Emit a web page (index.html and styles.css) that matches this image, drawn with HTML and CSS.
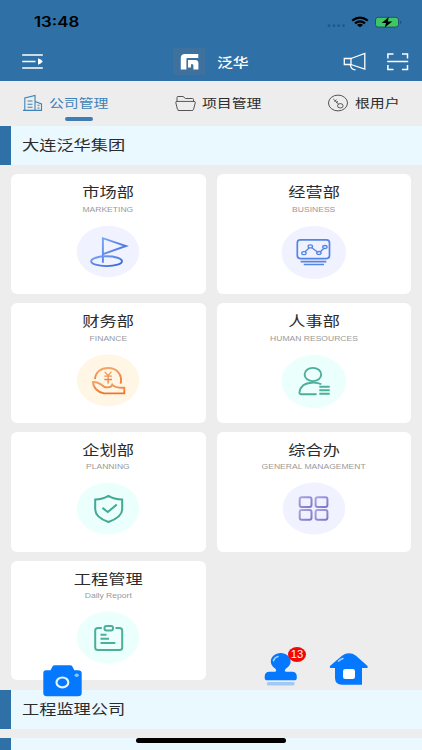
FILE: index.html
```html
<!DOCTYPE html>
<html lang="zh-CN">
<head>
<meta charset="utf-8">
<title>泛华</title>
<link rel="stylesheet" href="styles.css">
</head>
<body>
<div class="app">
  <header class="header">
    <div class="status">
      <span class="time wide">13:48</span>
      <svg class="status-icons" width="76" height="16" viewBox="326 14 76 16">
        <g fill="#245787"><circle cx="329" cy="25.7" r="1.4"/><circle cx="334" cy="25.7" r="1.4"/><circle cx="338.700" cy="25.7" r="1.4"/><circle cx="343.500" cy="25.7" r="1.4"/></g>
        <g fill="none" stroke="#000" stroke-width="2.300"><path d="M352.200 20.600Q360 14.600 367.800 20.600"/><path d="M355 23.300Q360 19.400 365 23.300"/></g>
        <path d="M356.900 24.900Q360 22.800 363.100 24.900L360 27.300Z"/>
        <rect x="375.500" y="17.300" width="23" height="9.800" rx="2.600" fill="#3dc765" stroke="#234f72" stroke-width="1"/>
        <path d="M400 20.500Q402.500 22.200 400 24Z" fill="#234f72"/>
        <path d="M388.800 17L381.700 22.900H386L384.700 27.500L392.300 21.400H387.800Z"/>
      </svg>
    </div>
    <div class="nav">
      <svg class="menu" width="22" height="16" viewBox="22 54 22 16" fill="none" stroke="#fff" stroke-width="1.600"><path d="M22.200 55H42.800M22.200 61.500H35.500M22.200 68H42.800"/><path d="M38 58.200Q41 59.200 42.800 61.500Q41 63.800 38 64.800Z" fill="#fff" stroke="none"/></svg>
      <div class="brand">
        <svg width="32" height="27" viewBox="173 48 32 27"><rect x="173" y="48" width="32" height="27" fill="#3e719d"/><path d="M180.800 69.500V58Q180.800 54 185 54H198.300V58H187.500Q186.400 58 186.400 59V69.500Z" fill="#fff"/><path d="M188 60H195Q198.400 60 198.400 63V69.500H193.400V65.200Q193.400 64.300 192.500 64.300H191V67.500H188Z" fill="#fff"/></svg>
        <span class="brand-name wide">泛华</span>
      </div>
      <div class="actions">
        <svg width="23" height="19" viewBox="343 52 23 19" fill="none" stroke="#fff" stroke-width="1.300"><path d="M344.300 58.500H351V64.500H344.300Z"/><path d="M351 58.500L364.800 53.400V69L351 64.500"/><path d="M350.500 65Q350.800 69.500 355.500 69.900"/></svg>
        <svg width="22" height="18" viewBox="387 53 22 18" fill="none" stroke="#fff" stroke-width="1.500"><path d="M387.900 58.500V54H393.500M402 54H407.500V58.500M387.900 65V69.500H393.500M402 69.500H407.500V65M387.200 61.600H408.200"/></svg>
      </div>
    </div>
  </header>

  <nav class="tabs">
    <div class="tab tab-company active">
      <svg width="20" height="18" viewBox="23 94 20 18" fill="none" stroke="#3e82b7" stroke-width="1.100"><path d="M24.800 110V98L35 95.500V110M35 101.500L41.500 104V110M23 110.400H42"/><path d="M27.500 101H32.500M27.500 104.200H32.500M27.500 107.200H32.500M37.500 105.300H39.500M37.500 108H39.500"/></svg>
      <span class="wide">公司管理</span>
    </div>
    <div class="tab tab-project">
      <svg width="22" height="17" viewBox="175 95 22 17" fill="none" stroke="#555" stroke-width="1"><path d="M178 109.500Q177.300 110.500 179 110.500H191.800Q193.300 110.500 193.500 109.500L195.300 102.700Q195.500 101.400 194 101.400H177Q175.500 101.400 175.800 102.700L177.500 109.500M177 101.400V97.500Q177 96.500 178 96.500H183L185.500 98.500H192.500Q193.500 98.500 193.500 99.500V101.400"/></svg>
      <span class="wide">项目管理</span>
    </div>
    <div class="tab tab-user">
      <svg width="22" height="18" viewBox="327 94 22 18" fill="none" stroke="#555" stroke-width="1"><ellipse cx="338" cy="103" rx="9.500" ry="7.900"/><ellipse cx="340.300" cy="105.800" rx="2.800" ry="2.200"/><path d="M338.500 104L333.300 99M334.500 101.500L336.500 99.800M336 103L338 101.300"/></svg>
      <span class="wide">根用户</span>
    </div>
  </nav>

  <main>
    <h2 class="section"><span class="wide">大连泛华集团</span></h2>
    <div class="cards">
      <article class="card">
        <h3 class="wide">市场部</h3><p class="wide">MARKETING</p>
        <svg class="icon" viewBox="0 0 80 60"><defs><linearGradient id="blue" x2="1" y2="1"><stop stop-color="#78a4f5"/><stop offset="1" stop-color="#3562d3"/></linearGradient></defs><ellipse cx="40" cy="29.500" rx="31.200" ry="25.700" fill="#f0f2ff"/><g fill="none" stroke="url(#blue)" stroke-width="1.900"><path d="M34.900 40.800V16.200L58 24L35 32.200"/><ellipse cx="38.600" cy="39.200" rx="15.400" ry="4.900"/></g></svg>
      </article>
      <article class="card">
        <h3 class="wide">经营部</h3><p class="wide">BUSINESS</p>
        <svg class="icon" viewBox="0 0 80 60"><ellipse cx="39.800" cy="30.400" rx="32.300" ry="26.500" fill="#f0f2ff"/><g fill="none" stroke="#5585e3" stroke-width="1.700"><rect x="23.300" y="17.900" width="32.200" height="18.700" rx="3"/><path d="M26.600 39.700H52.300M29.800 42.500H50"/><path stroke-width="1.300" d="M30.900 30L35.300 25.800M37.500 25.500L43.500 30M46 30L50 26.200"/><g stroke-width="1.300"><ellipse cx="29.900" cy="31.200" rx="2.200" ry="1.500"/><ellipse cx="36.300" cy="24.400" rx="2.200" ry="1.500"/><ellipse cx="44.900" cy="31" rx="2.200" ry="1.500"/><ellipse cx="50.900" cy="25" rx="2.200" ry="1.500"/></g></g></svg>
      </article>
      <article class="card">
        <h3 class="wide">财务部</h3><p class="wide">FINANCE</p>
        <svg class="icon" viewBox="0 0 80 60"><defs><linearGradient id="orange" x2="0" y2="1"><stop stop-color="#f3a568"/><stop offset="1" stop-color="#ee762f"/></linearGradient></defs><ellipse cx="40" cy="29.300" rx="31.200" ry="26" fill="#fff6e5"/><g fill="none" stroke="url(#orange)" stroke-width="1.900"><path d="M27 28C27.400 21 33 17 40 17C49.500 17 54.500 24 52.700 32.600"/><path d="M25 31C29 30.800 32.500 32.500 36.500 36C39 36.800 41.500 36.200 43 35.700L44.200 33.500C46 36 50 37 56.300 36.800V42.400H36C29.500 41 25 36.500 25 31Z"/><path stroke-width="1.300" d="M36.700 20.700L40.100 24.500L43.500 20.700M40.100 24.500V32.500M36.300 25.200H44M36.300 28.500H44"/></g></svg>
      </article>
      <article class="card">
        <h3 class="wide">人事部</h3><p class="wide">HUMAN RESOURCES</p>
        <svg class="icon" viewBox="0 0 80 60"><ellipse cx="39.800" cy="30.400" rx="32.300" ry="26.500" fill="#ebfffc"/><g fill="none" stroke="#4daf9b" stroke-width="1.900"><ellipse cx="38.900" cy="23.500" rx="8.300" ry="6.600"/><path d="M42.600 43.200H27.500Q25 43.200 25.500 41C26.500 35 31 32 37.500 31.700Q44 31.300 47.300 33.300"/><path d="M45.300 35.800H55.700M45.300 39.200H55.700M45.300 42.800H55.700"/></g></svg>
      </article>
      <article class="card">
        <h3 class="wide">企划部</h3><p class="wide">PLANNING</p>
        <svg class="icon" viewBox="0 0 80 60"><ellipse cx="40" cy="29.500" rx="31.200" ry="26" fill="#ebfffc"/><g fill="none" stroke="#43a994" stroke-width="2"><path d="M40.400 16.900Q46 20.300 54.200 20.600V30.500C54 36 48 40.300 40.400 43C32.800 40.300 27.400 36 27.200 30.500V20.600Q34.800 20.300 40.400 16.900Z"/><path d="M34.500 28.900L39.800 33L48.800 25.600"/></g></svg>
      </article>
      <article class="card">
        <h3 class="wide">综合办</h3><p class="wide">GENERAL MANAGEMENT</p>
        <svg class="icon" viewBox="0 0 80 60"><defs><linearGradient id="violet" x2="1" y2="1"><stop stop-color="#aaa4e2"/><stop offset="1" stop-color="#7d76cc"/></linearGradient></defs><ellipse cx="40" cy="29.500" rx="31.300" ry="26" fill="#f0f2ff"/><g fill="none" stroke="url(#violet)" stroke-width="2"><rect x="25.700" y="18.200" width="11.800" height="9.800" rx="2"/><rect x="41.600" y="18.200" width="11.800" height="9.800" rx="2"/><rect x="25.700" y="31" width="11.800" height="9.800" rx="2"/><rect x="41.600" y="31" width="11.800" height="9.800" rx="2"/></g></svg>
      </article>
      <article class="card">
        <h3 class="wide">工程管理</h3><p class="wide">Daily Report</p>
        <svg class="icon" viewBox="0 0 80 60"><ellipse cx="40" cy="29.500" rx="31.200" ry="26" fill="#ebfffc"/><g fill="none" stroke="#4daf9b" stroke-width="2"><path d="M33.800 20H30Q27.200 20 27.200 22.500V39.500Q27.200 42 30 42H51.400Q54.200 42 54.200 39.500V22.500Q54.200 20 51.400 20H47.500"/><rect x="36.500" y="18" width="8.500" height="4.500" rx="2"/><path d="M32.500 26.800H38.500M32.500 30.800H41M32.500 35H47.300"/></g></svg>
      </article>
    </div>
    <h2 class="section"><span class="wide">工程监理公司</span></h2>
    <h2 class="section next"></h2>
  </main>

  <svg class="camera" width="40" height="33" viewBox="43 664 40 33"><path d="M46 670.300H50.500L52.500 666.500Q53.200 665.200 54.700 665.200H70.200Q71.700 665.200 72.400 666.500L74.300 670.300H78Q81.700 670.300 81.700 673.500V693Q81.700 696.200 78 696.200H47Q43.300 696.200 43.300 693V673.500Q43.300 670.300 46 670.300Z" fill="#0479ff"/><ellipse cx="62.400" cy="682.400" rx="5.900" ry="4.900" fill="none" stroke="#e6f3ff" stroke-width="2.200"/><ellipse cx="76.700" cy="675.300" rx="2.100" ry="1.700" fill="#8fc5ff"/></svg>
  <div class="stamp">
    <svg width="34" height="34" viewBox="264 652 34 34"><path d="M275.500 671.800Q277 670.500 275.500 668.800C272.500 667 270.800 664.500 270.800 661.500C270.800 656.700 275.200 653 280.700 653S290.600 656.700 290.600 661.500C290.600 664.500 288.800 667 285.700 668.800Q284 670.500 285.500 671.800H292Q296.800 671.800 296.800 676.500V678Q296.800 680.300 294 680.300H267.500Q264.700 680.300 264.700 678V676.500Q264.700 671.800 269.500 671.800Z" fill="#0479ff"/><path d="M273.500 660.800Q274.500 657.500 278 656.600" fill="none" stroke="#a8d2ff" stroke-width="1.500" stroke-linecap="round"/><rect x="266.700" y="682" width="28" height="3.500" rx="1.700" fill="#a1c9f6"/></svg>
    <span class="badge"><span class="wide">13</span></span>
  </div>
  <svg class="home" width="40" height="33" viewBox="329 653 40 33"><path d="M331 668Q328.800 667.500 330.500 665.500L342 655.700Q349 651 356 655.700L367 665.500Q368.800 667.500 366.500 668H362V684.800H342Q335 684.500 335 678V668Z" fill="#0479ff"/><rect x="343" y="669" width="12" height="10" rx="2.300" fill="#fff"/><path d="M338.500 661.300Q340.500 659.200 343 658.500" fill="none" stroke="#a8d2ff" stroke-width="1.400" stroke-linecap="round"/></svg>
  <div class="home-indicator"></div>
</div>
</body>
</html>
```
FILE: styles.css
```css
* { box-sizing: border-box; }
body {
  margin: 0;
  background: #ededed;
  font-family: "Liberation Sans", "Noto Sans CJK SC", sans-serif;
  color: #2c2c2c;
}
h2, h3, p { margin: 0; font-weight: 400; }
svg { display: block; flex: none; }
.app { position: relative; height: 750px; overflow: hidden; }
/* Letterforms are drawn wider than tall throughout the interface. */
.wide { display: block; transform: scaleX(1.22); white-space: nowrap; }

.header { height: 81px; background: #2f70a7; }
.status { height: 44px; padding: 14px 20px 0 34px; display: flex; justify-content: space-between; }
.time {
  font: 600 13.8px/16px Inter, sans-serif;
  color: #000;
  transform-origin: left;
}
.nav { height: 35px; padding: 0 13px 0 22px; display: grid; grid-template-columns: 1fr auto 1fr; align-items: center; }
.brand { display: flex; align-items: center; gap: 12px; margin-left: -11px; }
.brand-name { color: #fff; font-size: 13px; font-weight: 500; transform-origin: left; width: 31px; }
.actions { display: flex; justify-content: flex-end; align-items: center; gap: 21px; }

.tabs { height: 44.500px; display: flex; padding: 0 23px; }
.tab { position: relative; display: flex; align-items: center; height: 44px; font-size: 12.200px; }
.tab .wide { transform-origin: left; }
.tab-company { width: 152px; gap: 6px; color: #3e82b7; }
.tab-project { width: 152px; gap: 5px; }
.tab-user { gap: 6px; }
.active::after {
  content: "";
  position: absolute;
  left: 42px;
  bottom: 4px;
  width: 28px;
  height: 4.500px;
  border-radius: 3px;
  background: #3e7eb5;
}

.section {
  height: 39.700px;
  border-left: 11px solid #2f70a7;
  background: #eaf8ff;
  padding-left: 11px;
  font-size: 14.100px;
  line-height: 39px;
}
.section .wide { transform-origin: left; }
.next { margin-top: 9px; }
.cards { display: grid; grid-template-columns: 1fr 1fr; grid-auto-rows: 119.600px; gap: 9.200px 11px; padding: 9.200px 11px; }
.card {
  background: #fff;
  border-radius: 6px;
  display: flex;
  flex-direction: column;
  align-items: center;
}
.card h3 { margin-top: 8px; font-size: 14.100px; line-height: 21px; }
.card p { margin-top: 1.500px; font-size: 7px; line-height: 10px; color: #999; }
.icon { width: 80px; height: 60px; margin-top: 7px; }

.camera { position: absolute; left: 43px; top: 664px; }
.stamp { position: absolute; left: 264px; top: 652px; }
.badge {
  position: absolute;
  left: 24px;
  top: -5.500px;
  width: 18px;
  height: 15px;
  border-radius: 50%;
  background: #f70505;
  color: #fff;
  font-size: 10px;
  line-height: 15.500px;
  text-align: center;
}
.badge .wide { transform: scaleX(1.120); }
.home { position: absolute; left: 329px; top: 653px; }
.home-indicator { position: absolute; left: 136px; top: 738px; width: 150px; height: 4.500px; border-radius: 3px; background: #000; }
```
